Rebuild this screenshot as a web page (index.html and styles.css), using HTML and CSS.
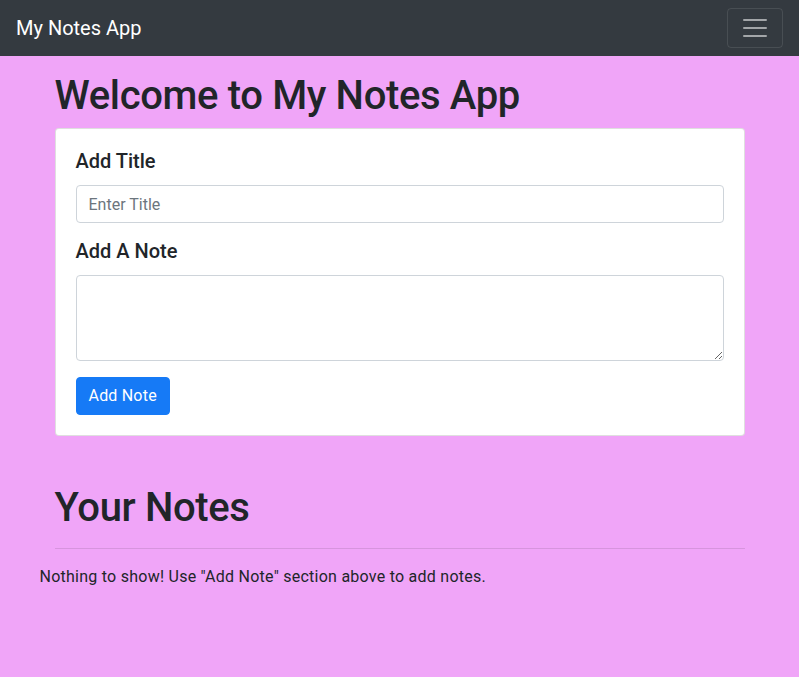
FILE: index.html
```html
<!DOCTYPE html>
<html lang="en">
<head>
<meta charset="utf-8">
<title>My Notes App</title>
<link rel="stylesheet" href="styles.css">
</head>
<body>
<nav class="navbar">
  <a class="brand" href="#">My Notes App</a>
  <button class="toggler" type="button" aria-label="Toggle navigation">
    <svg class="toggler-icon" viewBox="0 0 30 30" width="30" height="30">
      <path d="M4 7h22M4 15h22M4 23h22" stroke="rgba(255,255,255,0.55)" stroke-width="2" stroke-linecap="round" fill="none"/>
    </svg>
  </button>
</nav>

<main class="container top">
  <h1 class="heading">Welcome to My Notes App</h1>
  <div class="card">
    <div class="card-body">
      <div class="form-group">
        <h5 class="label">Add Title</h5>
        <input class="form-control" type="text" placeholder="Enter Title">
      </div>
      <div class="form-group">
        <h5 class="label">Add A Note</h5>
        <textarea class="form-control textarea" rows="3"></textarea>
      </div>
      <button class="btn-primary" type="button">Add Note</button>
    </div>
  </div>
</main>

<section class="container notes">
  <h1 class="heading">Your Notes</h1>
  <hr class="divider">
  <div class="row">
    <p class="empty">Nothing to show! Use "Add Note" section above to add notes.</p>
  </div>
</section>
</body>
</html>
```

FILE: styles.css
```css
* { box-sizing: border-box; }

html, body { margin: 0; }

body {
  background: #f0a5f8;
  color: #212529;
  font-family: Roboto, "Liberation Sans", sans-serif;
  font-size: 16px;
  line-height: 1.5;
}

.navbar {
  background: #343a40;
  height: 56px;
  padding: 8px 16px;
  display: flex;
  align-items: center;
  justify-content: space-between;
}

.brand {
  color: #fff;
  font-size: 20px;
  line-height: 30px;
  text-decoration: none;
}

.toggler {
  width: 56px;
  height: 40px;
  padding: 4px 12px;
  background: transparent;
  border: 1px solid rgba(255,255,255,0.1);
  border-radius: 4px;
  display: flex;
  align-items: center;
  justify-content: center;
}

.toggler-icon { display: block; }

.container {
  width: 720px;
  margin: 0 auto;
  padding: 0 15px;
}

.top { margin-top: 16px; }

.heading {
  font-size: 40px;
  font-weight: 500;
  line-height: 48px;
  margin: 0 0 8px;
  letter-spacing: -0.35px;
}

.card {
  background: #fff;
  border: 1px solid rgba(0,0,0,0.125);
  border-radius: 4px;
}

.card-body { padding: 20px; }

.form-group { margin-bottom: 16px; }

.label {
  font-size: 20px;
  font-weight: 500;
  line-height: 24px;
  margin: 0 0 12px;
}

.form-control {
  display: block;
  width: 100%;
  height: 38px;
  padding: 6px 12px;
  font-family: inherit;
  font-size: 16px;
  line-height: 24px;
  color: #495057;
  background: #fff;
  border: 1px solid #ced4da;
  border-radius: 4px;
}

.form-control::placeholder { color: #6c757d; opacity: 1; }

.textarea {
  height: 86px;
  resize: vertical;
}

.btn-primary {
  display: inline-block;
  height: 38px;
  padding: 6px 12px;
  font-family: inherit;
  font-size: 16px;
  line-height: 24px;
  letter-spacing: 0.2px;
  color: #fff;
  background: #167af6;
  border: 1px solid #167af6;
  border-radius: 4px;
}

.notes { margin-top: 48px; }

.divider {
  border: 0;
  border-top: 1px solid rgba(0,0,0,0.1);
  margin: 16px 0;
}

.row {
  margin: 0 -15px;
}

.empty {
  margin: 0;
  font-size: 16px;
  line-height: 24px;
  letter-spacing: 0.25px;
}
```
